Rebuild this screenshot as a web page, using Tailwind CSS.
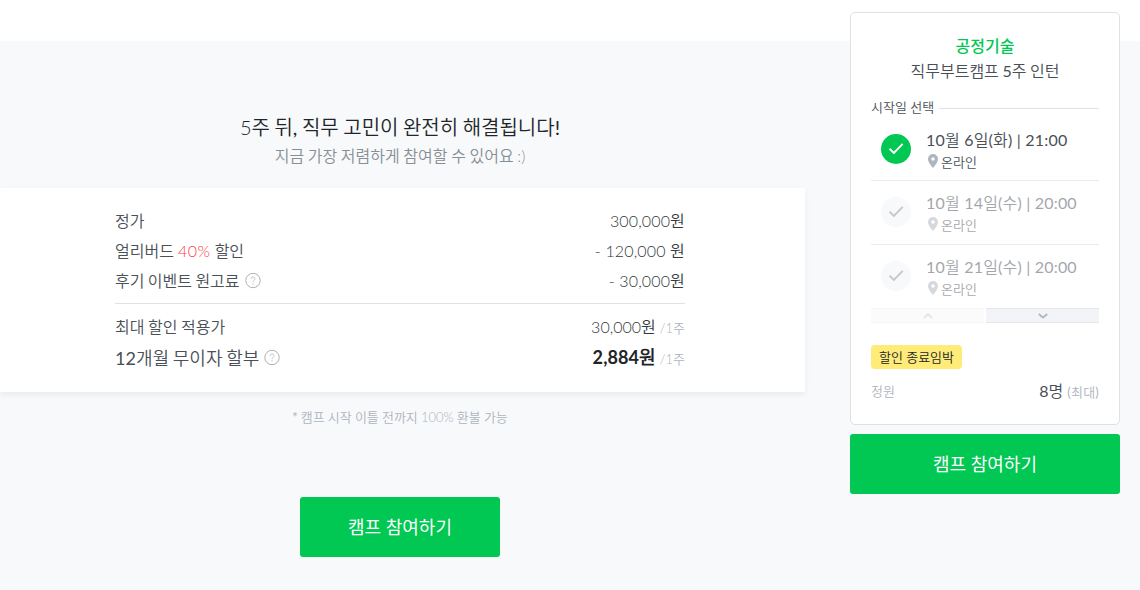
<!DOCTYPE html>
<html lang="ko">
<head>
  <meta charset="UTF-8">
  <meta name="viewport" content="width=device-width, initial-scale=1.0">
  <title>직무부트캠프</title>
  <script src="https://cdn.jsdelivr.net/npm/@tailwindcss/browser@4"></script>
</head>
<body class="bg-[#f8f9fb] text-[#495057] text-base font-normal font-[Lato,'Noto_Sans_CJK_KR_DemiLight','Noto_Sans_CJK_KR_Light','Noto_Sans_CJK_KR',sans-serif] overflow-hidden">

  <!-- Top strip -->
  <div class="h-[41px] bg-white"></div>

  <div class="flex h-[549px]">

    <!-- Price Section -->
    <main class="w-[805px] shrink-0 pt-[71px]">
      <div class="w-[800px] text-center">
        <h2 class="text-xl leading-[30px] text-[#212529] [word-spacing:-.6px]"><span class="font-light">5</span>주 뒤, 직무 고민이 완전히 해결됩니다!</h2>
        <p class="pt-px leading-[26px] font-light text-[#868e96] [word-spacing:-.7px]">지금 가장 저렴하게 참여할 수 있어요 :)</p>
      </div>

      <!-- Price Card -->
      <div class="mt-[19px] h-[204px] bg-white pl-[115px] pr-[120px] pt-[18px] shadow-[0_3px_6px_rgba(0,0,0,0.06)]">
        <div class="flex justify-between h-[30px] leading-[30px]">
          <span>정가</span>
          <span class="font-light tracking-[.15px] text-[#343a40]">300,000원</span>
        </div>
        <div class="flex justify-between h-[30px] leading-[30px]">
          <span>얼리버드 <span class="font-light tracking-[.5px] text-[#fa3c46]">40%</span> 할인</span>
          <span class="font-light tracking-[.15px] text-[#343a40]">- 120,000 원</span>
        </div>
        <div class="flex justify-between h-[30px] leading-[30px]">
          <span class="flex items-center gap-[5px] [word-spacing:-.7px]">후기 이벤트 원고료
            <svg class="size-4" viewBox="0 0 16 16" fill="none" stroke="#adb0b3"><circle cx="8" cy="7.500" r="7.200"/><path d="M6 6c0-1.200.8-2 2-2s2 .8 2 1.900c0 1.500-2 1.500-2 3.100M8 10.300v1.200" stroke="#c0c3c6"/></svg>
          </span>
          <span class="font-light tracking-[.15px] text-[#343a40]">- 30,000원</span>
        </div>
        <div class="mt-[7px] mb-2 border-t border-[#dee2e6]"></div>
        <div class="flex justify-between h-[30px] leading-[30px]">
          <span class="[word-spacing:-.5px]">최대 할인 적용가</span>
          <span><span class="font-light text-[#343a40]">30,000원</span> <span class="text-[13px] font-light text-[#adb5bd]">/1주</span></span>
        </div>
        <div class="flex justify-between h-8 leading-8">
          <span class="flex items-center gap-[5px] text-lg [word-spacing:-.8px]">12개월 무이자 할부
            <svg class="size-4" viewBox="0 0 16 16" fill="none" stroke="#adb0b3"><circle cx="8" cy="7.500" r="7.200"/><path d="M6 6c0-1.200.8-2 2-2s2 .8 2 1.900c0 1.500-2 1.500-2 3.100M8 10.300v1.200" stroke="#c0c3c6"/></svg>
          </span>
          <span><b class="text-lg font-bold tracking-[.1px] text-[#212529]">2,884원</b> <span class="text-[13px] font-light text-[#adb5bd]">/1주</span></span>
        </div>
      </div>

      <p class="mt-[15px] w-[800px] text-center text-[13px] leading-5 text-[#adb5bd] [word-spacing:-.2px]">* 캠프 시작 이틀 전까지 <span class="font-light">100%</span> 환불 가능</p>
      <button class="mt-[70px] ml-[300px] block w-[200px] h-[60px] rounded-[3px] bg-[#00c853] text-lg font-[Lato,'Noto_Sans_CJK_KR',sans-serif] text-white">캠프 참여하기</button>
    </main>

    <!-- Camp Sidebar -->
    <aside class="relative -mt-[29px] ml-[45px] w-[270px] shrink-0">
      <div class="h-[413px] rounded-[5px] border border-[#dee2e6] bg-white px-5 pt-5">
        <h3 class="text-center leading-[25px] font-[Lato,'Noto_Sans_CJK_KR',sans-serif] font-medium text-[#00c853]">공정기술</h3>
        <p class="text-center leading-[25px] [word-spacing:-.5px]">직무부트캠프 5주 인턴</p>

        <div class="mt-[15px] flex h-5 items-center gap-[5px] text-[13px] leading-5">
          <span class="shrink-0 pb-[2px]">시작일 선택</span>
          <div class="h-px grow bg-[#dee2e6]"></div>
        </div>

        <!-- Start dates -->
        <ul>
          <li class="flex h-[63px] border-b border-[#e9ecef] pl-[10px]">
            <svg class="mt-4 size-[30px]" viewBox="0 0 30 30" fill="none"><circle cx="15" cy="15" r="15" fill="#00c853"/><path d="M8.500 14.700l4.400 4.200 8.800-9" stroke="#fff" stroke-width="2"/></svg>
            <div class="ml-[15px] pt-[10px]">
              <p class="leading-[24px] tracking-[.2px]">10월 6일(화) | 21:00</p>
              <p class="flex items-center gap-[3px] pl-[2px] text-[13px] leading-5">
                <svg class="w-[10px] h-[14px] -mt-[2px]" viewBox="0 0 10 14"><path fill="#adb5bd" fill-rule="evenodd" d="M5 0a5 5 0 0 1 5 5c0 3.500-5 9-5 9S0 8.500 0 5a5 5 0 0 1 5-5zm0 3.200a1.800 1.800 0 1 0 0 3.600 1.800 1.800 0 0 0 0-3.600z"/></svg>온라인
              </p>
            </div>
          </li>
          <li class="flex h-16 border-b border-[#e9ecef] pl-[10px]">
            <svg class="mt-4 size-[30px]" viewBox="0 0 30 30" fill="none"><circle cx="15" cy="15" r="15" fill="#f8f9fb"/><path d="M8.500 14.700l4.400 4.200 8.800-9" stroke="#c8c8c8" stroke-width="2"/></svg>
            <div class="ml-[15px] pt-[10px] opacity-50">
              <p class="leading-[24px] tracking-[.2px]">10월 14일(수) | 20:00</p>
              <p class="flex items-center gap-[3px] pl-[2px] text-[13px] leading-5">
                <svg class="w-[10px] h-[14px] -mt-[2px]" viewBox="0 0 10 14"><path fill="#adb5bd" fill-rule="evenodd" d="M5 0a5 5 0 0 1 5 5c0 3.500-5 9-5 9S0 8.500 0 5a5 5 0 0 1 5-5zm0 3.200a1.800 1.800 0 1 0 0 3.600 1.800 1.800 0 0 0 0-3.600z"/></svg>온라인
              </p>
            </div>
          </li>
          <li class="flex h-[63px] pl-[10px]">
            <svg class="mt-4 size-[30px]" viewBox="0 0 30 30" fill="none"><circle cx="15" cy="15" r="15" fill="#f8f9fb"/><path d="M8.500 14.700l4.400 4.200 8.800-9" stroke="#c8c8c8" stroke-width="2"/></svg>
            <div class="ml-[15px] pt-[10px] opacity-50">
              <p class="leading-[24px] tracking-[.2px]">10월 21일(수) | 20:00</p>
              <p class="flex items-center gap-[3px] pl-[2px] text-[13px] leading-5">
                <svg class="w-[10px] h-[14px] -mt-[2px]" viewBox="0 0 10 14"><path fill="#adb5bd" fill-rule="evenodd" d="M5 0a5 5 0 0 1 5 5c0 3.500-5 9-5 9S0 8.500 0 5a5 5 0 0 1 5-5zm0 3.200a1.800 1.800 0 1 0 0 3.600 1.800 1.800 0 0 0 0-3.600z"/></svg>온라인
              </p>
            </div>
          </li>
        </ul>

        <!-- List scroll buttons -->
        <div class="grid grid-cols-2 gap-[2px]">
          <button class="flex h-[15px] items-center justify-center border-y border-[#f4f5f6] bg-[#fbfbfc]">
            <svg class="w-[10px] h-[6px]" viewBox="0 0 10 6" fill="none" stroke="#dcdfe2" stroke-width="1.500"><path d="M.8 5L5 1.200 9.200 5"/></svg>
          </button>
          <button class="flex h-[15px] items-center justify-center border-y border-[#e4e7ea] bg-[#f3f4f7]">
            <svg class="w-[10px] h-[6px]" viewBox="0 0 10 6" fill="none" stroke="#adb5bd" stroke-width="1.700"><path d="M.8 1L5 4.600 9.200 1"/></svg>
          </button>
        </div>

        <span class="mt-[22px] block h-6 w-[91px] rounded bg-[#ffec78] text-center text-[13px] leading-6 text-[#212529]">할인 종료임박</span>
        <div class="mt-[10px] flex justify-between leading-6">
          <span class="text-[13px] text-[#adb5bd]">정원</span>
          <span>8명 <span class="text-[13px] tracking-[.2px] text-[#adb5bd]">(최대)</span></span>
        </div>
      </div>
      <button class="mt-[9px] block w-full h-[60px] rounded-[3px] bg-[#00c853] text-lg font-[Lato,'Noto_Sans_CJK_KR',sans-serif] text-white">캠프 참여하기</button>
    </aside>

  </div>
</body>
</html>
